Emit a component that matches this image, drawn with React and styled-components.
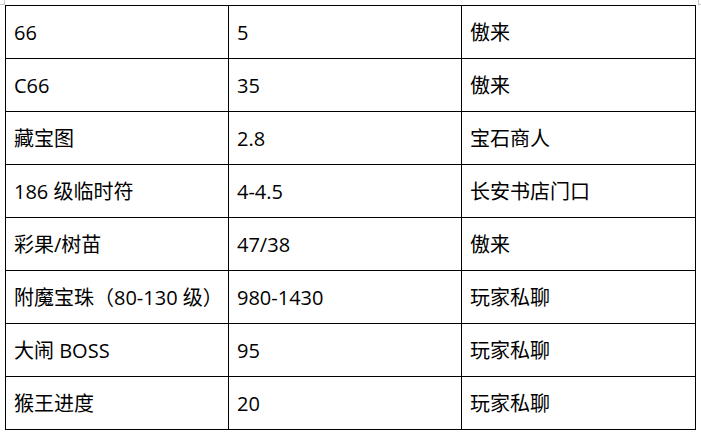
import React from "react"
import styled, { createGlobalStyle } from "styled-components"

const GlobalStyle = createGlobalStyle`
  html, body {
    margin: 0;
    padding: 0;
    background: #ffffff;
  }
  body {
    font-family: "Open Sans", "Noto Sans CJK SC", sans-serif;
    color: #000000;
  }
`

const Page = styled.div`
  position: relative;
  width: 701px;
  height: 434px;
  padding: 5px 0 0 5px;
  box-sizing: border-box;

  &::before {
    content: "";
    position: absolute;
    left: 0;
    top: 0;
    width: 4px;
    height: 4px;
    border-right: 1px solid #c8c8c8;
    border-bottom: 1px solid #c8c8c8;
  }
  &::after {
    content: "";
    position: absolute;
    left: 698px;
    top: 0;
    width: 3px;
    height: 4px;
    border-left: 1px solid #c8c8c8;
    border-bottom: 1px solid #c8c8c8;
  }
`

const Table = styled.div`
  display: grid;
  grid-template-columns: 223px 233px 234px;
  grid-auto-rows: 53px;
  width: max-content;
  border-left: 1px solid #000;
  border-top: 1px solid #000;
`

const Cell = styled.div`
  display: flex;
  align-items: center;
  box-sizing: border-box;
  padding: 2px 0 0 8px;
  border-right: 1px solid #000;
  border-bottom: 1px solid #000;
  font-size: 20px;
  line-height: 1;
  white-space: nowrap;
`

const rows = [
  ["66", "5", "傲来"],
  ["C66", "35", "傲来"],
  ["藏宝图", "2.8", "宝石商人"],
  ["186 级临时符", "4-4.5", "长安书店门口"],
  ["彩果/树苗", "47/38", "傲来"],
  ["附魔宝珠（80-130 级）", "980-1430", "玩家私聊"],
  ["大闹 BOSS", "95", "玩家私聊"],
  ["猴王进度", "20", "玩家私聊"],
]

const App = () => {
  return (
    <>
      <GlobalStyle />
      <Page>
        <Table>
          {rows.map((row, i) =>
            row.map((text, j) => <Cell key={i + "-" + j}>{text}</Cell>)
          )}
        </Table>
      </Page>
    </>
  )
}

export default App
